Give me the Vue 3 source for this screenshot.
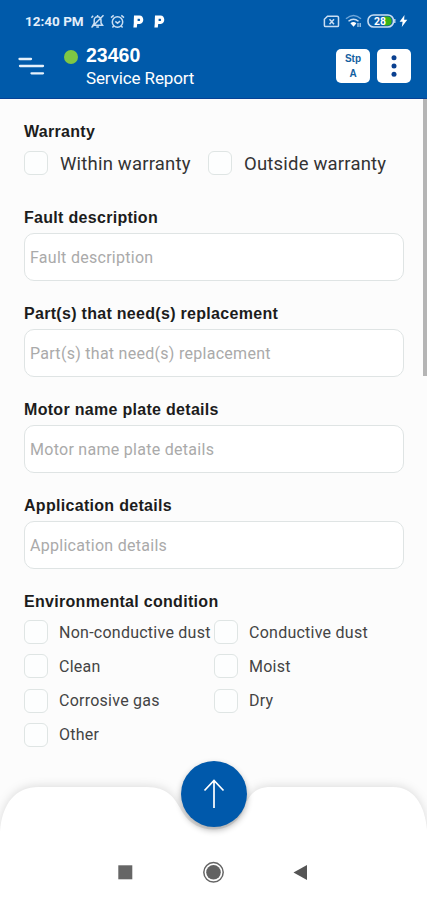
<script setup>
const fields = [
  'Fault description',
  'Part(s) that need(s) replacement',
  'Motor name plate details',
  'Application details',
]
const conditions = ['Non-conductive dust', 'Conductive dust', 'Clean', 'Moist', 'Corrosive gas', 'Dry', 'Other']
</script>

<template>
  <div class="screen">
    <header class="top">
      <div class="status">
        <span class="time">12:40 PM</span>
        <svg class="s-bell" width="15" height="15" viewBox="0 0 15 15" fill="none" stroke="#c9def3" stroke-width="1.5">
          <path d="M3 11.2h9.500L11 9V6.200C11 4 9.600 2.800 7.600 2.800S4.200 4 4.200 6.200V9L3 11.200zM6.300 13h2.600M7.600 1v1.500M13.500 1.300L1.500 13.500M3.200 1.800L1.400 3.700" />
        </svg>
        <svg class="s-alarm" width="15" height="15" viewBox="0 0 15 15" fill="none" stroke="#c9def3" stroke-width="1.5">
          <circle cx="7.500" cy="8" r="5.200" /><path d="M5.300 7.400l2.200 1.800 2.600-2M1 3.600L3.700 1.400M14 3.600l-2.700-2.200M3.800 12l-1.400 1.500M11.200 12l1.400 1.500" />
        </svg>
        <svg v-for="n in 2" :key="n" class="s-p" width="11" height="13" viewBox="0 0 11 13" fill="#fff" fill-rule="evenodd">
          <path d="M1 .6h5.500c5 0 5 8.200.2 8.400H4.200L3.800 12.500H.4L.8 8V5z M4.600 3.800v2.200h1.500c1.300 0 1.300-2.200 0-2.200z" />
        </svg>
        <span class="grow"></span>
        <svg width="17" height="13" viewBox="0 0 17 13" fill="none" stroke="#c9def3" stroke-width="1.5">
          <path d="M4.500 1.200h9.800q1.200 0 1.200 1.200v8q0 1.200-1.200 1.200H2.600q-1.200 0-1.200-1.200V4.200zM6.500 4.200l4.500 5M11 4.200l-4.500 5" />
        </svg>
        <svg class="s-wifi" width="18" height="14" viewBox="0 0 18 14" fill="none" stroke="#6da5d8" stroke-width="1.5">
          <path d="M1 4.800q7.500-6.600 15 0" />
          <path d="M3.500 7.300q5-4.200 10 0" stroke="#c9def3" />
          <path d="M5.400 9.200q3-2.300 6 0L8.600 12.800z" fill="#fff" stroke="none" />
          <path d="M13 9v4M15.200 9v4" stroke="#a9cbea" stroke-width="1.300" />
        </svg>
        <svg class="s-batt" width="29" height="14" viewBox="0 0 29 14">
          <rect x="1" y="1" width="25.500" height="12" rx="5.600" fill="#075ca9" stroke="#c9def3" stroke-width="1.600" />
          <path d="M17 2.500h3.600q4 0 4 4.500t-4 4.500H17z" fill="#3bb414" />
          <path d="M27.800 5v4" stroke="#c9def3" stroke-width="1.300" />
          <text x="7" y="10.800" class="batt-text">28</text>
        </svg>
        <svg class="s-bolt" width="9" height="12" viewBox="0 0 9 12"><path d="M5.500 0L.6 6.800h3L2.800 12l5.500-7.300H5.100z" fill="#fff" /></svg>
      </div>
      <div class="bar">
        <svg class="menu" width="28" height="20" viewBox="0 0 28 20" stroke="#e6f1fb" stroke-width="2.300" stroke-linecap="round">
          <path d="M2.500 2h11.500M3 9h23M14.500 16.300h11.500" />
        </svg>
        <span class="dot"></span>
        <div class="titles">
          <strong>23460</strong>
          <span>Service Report</span>
        </div>
        <button class="sq stp"><span>Stp</span><span>A</span></button>
        <button class="sq more">
          <svg width="6" height="24" viewBox="0 0 6 24" fill="#0a4090"><circle cx="3" cy="3.800" r="2.500" /><circle cx="3" cy="12" r="2.500" /><circle cx="3" cy="20.200" r="2.500" /></svg>
        </button>
      </div>
    </header>

    <main class="form">
      <section class="warranty">
        <h2>Warranty</h2>
        <div class="checks">
          <label><i></i><span>Within warranty</span></label>
          <label><i></i><span>Outside warranty</span></label>
        </div>
      </section>
      <section v-for="f in fields" :key="f" class="field">
        <h2>{{ f }}</h2>
        <div class="input"><span>{{ f }}</span></div>
      </section>
      <section>
        <h2>Environmental condition</h2>
        <div class="grid">
          <label v-for="c in conditions" :key="c"><i></i><span>{{ c }}</span></label>
        </div>
      </section>
      <div class="scroll"></div>
    </main>

    <footer class="bottom">
      <svg class="shape" width="427" height="140" viewBox="0 0 427 140">
        <path d="M0 140V72C2 44 15 27 39 27H146C169 27 175 39 183 53C196 75 231 75 242 53C248 37 253 27 271 27H393C413 27 425 44 427 70V140z" fill="#fff" />
      </svg>
      <button class="up">
        <svg width="24" height="32" viewBox="0 0 24 32" fill="none" stroke="#fff" stroke-width="1.700"><path d="M12 30V2.500M2.500 12.500L12 2.500l9.500 10" /></svg>
      </button>
      <nav class="nav">
        <svg width="16" height="22" viewBox="0 0 16 22"><rect x="1.300" y="4.300" width="14" height="14" fill="#666" /></svg>
        <svg width="22" height="22" viewBox="0 0 22 22"><circle cx="11.500" cy="11.300" r="9.700" fill="none" stroke="#666" stroke-width="1.500" /><circle cx="11.500" cy="11.300" r="7.300" fill="#626262" /></svg>
        <svg width="16" height="22" viewBox="0 0 16 22"><path d="M.5 11.500L14 4v15z" fill="#555" /></svg>
      </nav>
    </footer>
  </div>
</template>

<style>
body { margin: 0; }
</style>

<style scoped>
.screen { position: relative; width: 427px; height: 900px; overflow: hidden; background: #fcfcfc; font-family: Roboto, "Liberation Sans", sans-serif; display: flex; flex-direction: column; }
.top { height: 99px; box-sizing: border-box; background: #005aaa; border-bottom: 1px solid #064296; flex: none; }
.status { height: 42px; box-sizing: border-box; display: flex; align-items: center; padding: 0 19px 0 25px; color: #e3effa; }
.time { font-size: 13.500px; font-weight: 700; width: 64px; white-space: nowrap; }
.s-bell { margin-left: 1px; }
.s-alarm { margin-left: 5px; }
.s-p { margin-left: 8px; }
.s-p + .s-p { margin-left: 10px; }
.grow { flex: 1; }
.s-wifi { margin-left: 5px; }
.s-batt { margin-left: 4px; }
.s-bolt { margin-left: 3px; }
.batt-text { font: 700 10.500px Roboto, sans-serif; fill: #fff; }
.bar { display: flex; align-items: flex-start; padding-left: 17px; height: 56px; }
.menu { margin-top: 15px; }
.dot { width: 14px; height: 14px; border-radius: 50%; background: #7fc744; margin: 8px 0 0 19px; }
.titles { display: flex; flex-direction: column; margin-left: 8px; width: 250px; color: #fff; }
.titles strong { font: 700 19.500px/24px "Liberation Sans", sans-serif; margin-top: 1px; height: 24px; }
.titles span { font-size: 17px; line-height: 22px; letter-spacing: -.12px; }
.sq { flex: none; width: 34px; height: 34px; border: 0; padding: 0; border-radius: 5px; background: #fff; margin-top: 7px; }
.stp { display: flex; flex-direction: column; align-items: center; font: 700 10px/15px "Liberation Sans", sans-serif; color: #13609f; padding-top: 2px; }
.more { margin-left: 7px; display: flex; align-items: center; justify-content: center; }
.form { position: relative; padding: 22px 23px 0 24px; }
h2 { margin: 0; font: 700 16px/22px "Liberation Sans", sans-serif; color: #1c1c1c; letter-spacing: .3px; white-space: nowrap; }
.warranty { height: 86px; }
.checks { display: flex; margin-top: 8px; }
.checks label { width: 184px; }
label { display: flex; align-items: center; height: 24px; color: #333; white-space: nowrap; }
i { flex: none; width: 24px; height: 24px; box-sizing: border-box; border: 1.500px solid #dfe5e4; border-radius: 6px; margin-right: 12px; background: #fdfefe; }
.checks span { font-size: 18.500px; letter-spacing: .2px; padding-top: 2px; }
.field { height: 96px; }
.input { height: 48px; box-sizing: border-box; border: 1.500px solid #dfe4e4; border-radius: 10px; background: #fff; margin-top: 4px; display: flex; align-items: center; padding: 0 0 0 5px; }
.input span { color: #aaa; font-size: 16px; letter-spacing: .28px; }
.grid { display: grid; grid-template-columns: 190px 190px; row-gap: 10.300px; margin-top: 7px; }
.grid i { margin-right: 11px; }
.grid span { font-size: 16px; letter-spacing: .25px; color: #444; }
.scroll { position: absolute; right: 0; top: 0; width: 4px; height: 277px; background: #b5b5b5; }
.bottom { position: absolute; left: 0; bottom: 0; width: 427px; height: 140px; }
.shape { display: block; filter: drop-shadow(0 -1px 5px rgba(0,0,0,.13)); }
.up { position: absolute; left: 180.500px; top: 1px; width: 66px; height: 66px; border: 0; padding: 0; border-radius: 50%; background: #0059ab; display: flex; align-items: center; justify-content: center; box-shadow: 0 3px 6px rgba(0,0,0,.3); }
.nav { position: absolute; left: 117px; top: 101px; width: 192px; display: flex; justify-content: space-between; }
</style>
